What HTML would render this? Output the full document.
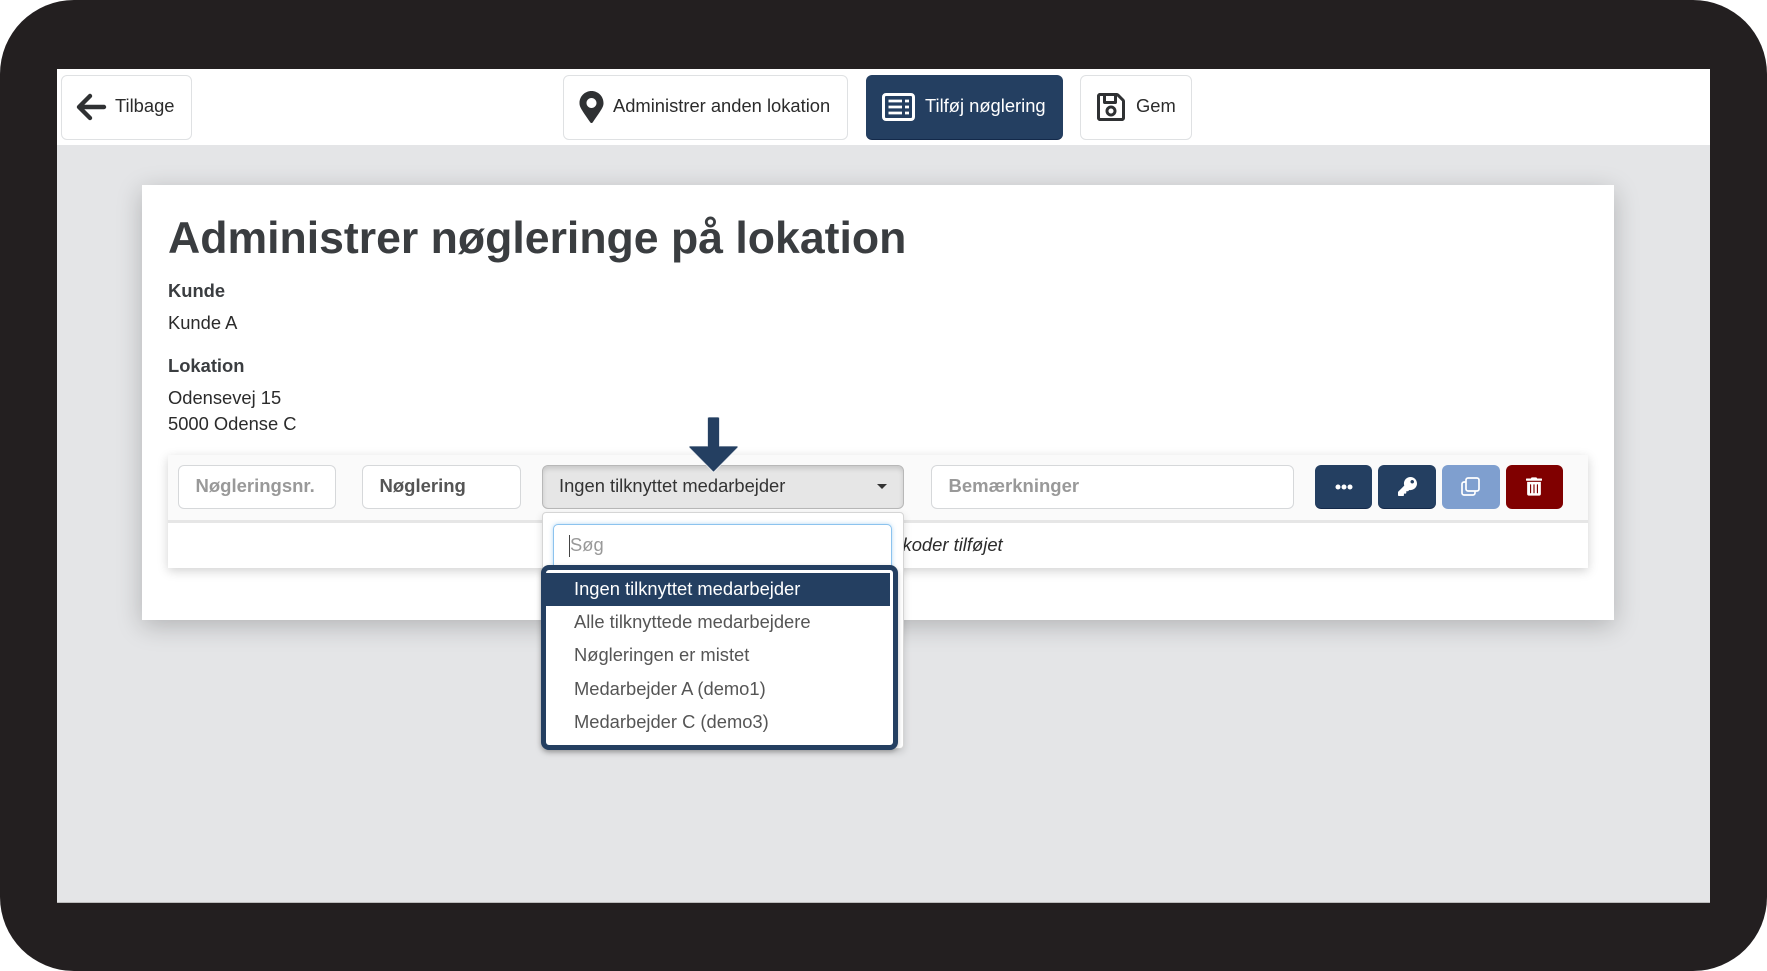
<!DOCTYPE html>
<html><head><meta charset="utf-8"><title>Administrer nøgleringe</title>
<style>
html,body{margin:0;padding:0;background:#fff}
body{width:1767px;height:971px;position:relative;overflow:hidden;font-family:"Liberation Sans",sans-serif;font-size:18.35px;color:#2b2b2b}
div,span,svg{position:absolute;box-sizing:border-box}
.t{white-space:nowrap;line-height:26px}
.btn{background:#fff;border:1.5px solid #dfe1e3;border-radius:6px}
.inp{background:#fff;border:1.5px solid #d6d8da;border-radius:6px;font-weight:bold;color:#999;line-height:40px;padding-left:16.5px;white-space:nowrap;font-size:18.5px}
.sq{background:#243f61;border-radius:6px;top:465px;height:44px;border-bottom:1px solid #13294a}
.it{left:574px;color:#555;white-space:nowrap;line-height:26px}
</style></head><body>
<div style="left:0;top:0;width:1767px;height:971px;background:#231f20;border-radius:74px"></div>
<div style="left:57px;top:69px;width:1653px;height:834px;background:#e4e5e7;border-bottom:1px solid #bbb"></div>
<div style="left:57px;top:69px;width:1653px;height:76px;background:#fff"></div>

<div class="btn" style="left:60.500px;top:75px;width:131.500px;height:65px"></div>
<svg style="left:76px;top:92px" width="32" height="30" viewBox="0 0 32 30"><path d="M28 15H4M14 4L3 15l11 11" fill="none" stroke="#2f3133" stroke-width="4.4" stroke-linecap="round" stroke-linejoin="round"/></svg>
<div class="t" style="left:115px;top:93px;">Tilbage</div>

<div class="btn" style="left:563px;top:75px;width:285px;height:65px"></div>
<svg style="left:579px;top:91px" width="25" height="32" viewBox="0 0 384 512"><path fill="#2f3133" d="M172.268 501.67C26.97 291.031 0 256.028 0 192 0 85.961 85.961 0 192 0s192 85.961 192 192c0 64.028-26.97 99.031-172.268 309.67-9.535 13.774-29.93 13.773-39.464 0zM192 272c44.183 0 80-35.817 80-80s-35.817-80-80-80-80 35.817-80 80 35.817 80 80 80z"/></svg>
<div class="t" style="left:613px;top:93px">Administrer anden lokation</div>

<div style="left:866px;top:75px;width:197px;height:65px;background:#243f61;border-radius:6px;border-bottom:1px solid #13294a"></div>
<svg style="left:882px;top:93px" width="33" height="28" viewBox="0 0 33 28"><rect x="1.500" y="1.500" width="30" height="25" rx="2.500" fill="none" stroke="#fff" stroke-width="3"/><path d="M6.500 8h13.500M6.500 14h13.500M6.500 20h13.500M23 8h4M23 14h4M23 20h4" stroke="#fff" stroke-width="2.800"/></svg>
<div class="t" style="left:925px;top:93px;color:#fff">Tilføj nøglering</div>

<div class="btn" style="left:1080px;top:75px;width:112px;height:65px"></div>
<svg style="left:1097px;top:91px" width="28" height="32" viewBox="0 0 448 512"><path fill="#2f3133" d="M433.941 129.941l-83.882-83.882A48 48 0 0 0 316.118 32H48C21.49 32 0 53.49 0 80v352c0 26.51 21.49 48 48 48h352c26.51 0 48-21.49 48-48V163.882a48 48 0 0 0-14.059-33.941zM272 80v80H144V80h128zm122 352H54a6 6 0 0 1-6-6V86a6 6 0 0 1 6-6h42v104c0 13.255 10.745 24 24 24h176c13.255 0 24-10.745 24-24V83.882l78.243 78.243a6 6 0 0 1 1.757 4.243V426a6 6 0 0 1-6 6zM224 232c-48.523 0-88 39.477-88 88s39.477 88 88 88 88-39.477 88-88-39.477-88-88-88zm0 128c-22.056 0-40-17.944-40-40s17.944-40 40-40 40 17.944 40 40-17.944 40-40 40z"/></svg>
<div class="t" style="left:1136px;top:93px">Gem</div>

<div style="left:142px;top:184.500px;width:1472px;height:435.500px;background:#fff;box-shadow:0 6px 24px rgba(0,0,0,.22)"></div>
<div class="t" style="left:168px;top:211px;font-size:44.6px;font-weight:bold;line-height:56px;color:#3a3d40">Administrer nøgleringe på lokation</div>
<div class="t" style="left:168px;top:278px;font-weight:bold;color:#3a3d40">Kunde</div>
<div class="t" style="left:168px;top:309.500px">Kunde A</div>
<div class="t" style="left:168px;top:353px;font-weight:bold;color:#3a3d40">Lokation</div>
<div class="t" style="left:168px;top:385px">Odensevej 15</div>
<div class="t" style="left:168px;top:411px">5000 Odense C</div>

<div style="left:168px;top:455px;width:1420px;height:113px;background:#fff;box-shadow:0 3px 10px rgba(0,0,0,.18)"></div>
<div style="left:168px;top:455px;width:1420px;height:65px;background:#fafafa"></div>
<div style="left:168px;top:519.500px;width:1420px;height:3px;background:#e6e6e6"></div>

<div class="inp" style="left:178px;top:465px;width:158px;height:44px">Nøgleringsnr.</div>
<div class="inp" style="left:362px;top:465px;width:159px;height:44px;color:#555">Nøglering</div>
<div class="inp" style="left:541.500px;top:465px;width:362.500px;height:43.500px;background:#e6e6e6;border-color:#b8b8b8;font-weight:normal;color:#333;font-size:18.35px;box-shadow:inset 0 3px 5px rgba(0,0,0,.125)">Ingen tilknyttet medarbejder</div>
<div style="left:877px;top:484px;width:0;height:0;border-left:5px solid transparent;border-right:5px solid transparent;border-top:5.500px solid #333"></div>
<div class="inp" style="left:931px;top:465px;width:363px;height:44px">Bemærkninger</div>

<div class="sq" style="left:1315px;width:57px"></div>
<svg style="left:1334.500px;top:483px" width="18" height="8" viewBox="0 0 18 8"><circle cx="3" cy="4" r="2.500" fill="#fff"/><circle cx="9" cy="4" r="2.500" fill="#fff"/><circle cx="15" cy="4" r="2.500" fill="#fff"/></svg>
<div class="sq" style="left:1378px;width:58px"></div>
<svg style="left:1398px;top:477px" width="19" height="19" viewBox="0 0 512 512"><path fill="#fff" d="M512 176.001C512 273.203 433.202 352 336 352c-11.22 0-22.19-1.062-32.827-3.069l-24.012 27.014A23.999 23.999 0 0 1 261.223 384H224v40c0 13.255-10.745 24-24 24h-40v40c0 13.255-10.745 24-24 24H24c-13.255 0-24-10.745-24-24v-78.059c0-6.365 2.529-12.47 7.029-16.971l161.802-161.802C163.108 213.814 160 195.271 160 176 160 78.798 238.797.001 335.999 0 433.488-.001 512 78.511 512 176.001zM336 128c0 26.51 21.49 48 48 48s48-21.49 48-48-21.49-48-48-48-48 21.49-48 48z"/></svg>
<div class="sq" style="left:1442px;width:58px;background:#7f9fcf;border-bottom-color:#7f9fcf"></div>
<svg style="left:1461px;top:477px" width="19" height="19" viewBox="0 0 19 19"><rect x="5" y="1" width="13" height="13" rx="2" fill="none" stroke="#fff" stroke-width="1.700"/><path d="M5 5H3a2 2 0 0 0-2 2v9a2 2 0 0 0 2 2h9a2 2 0 0 0 2-2v-2" fill="none" stroke="#fff" stroke-width="1.700"/></svg>
<div class="sq" style="left:1506px;width:57px;background:#800000;border-bottom-color:#800000"></div>
<svg style="left:1526px;top:477px" width="16" height="19" viewBox="0 0 448 512"><path fill="#fff" d="M32 464a48 48 0 0 0 48 48h288a48 48 0 0 0 48-48V128H32zm272-256a16 16 0 0 1 32 0v224a16 16 0 0 1-32 0zm-96 0a16 16 0 0 1 32 0v224a16 16 0 0 1-32 0zm-96 0a16 16 0 0 1 32 0v224a16 16 0 0 1-32 0zM432 32H312l-9.4-18.7A24 24 0 0 0 281.1 0H166.8a23.72 23.720 0 0 0-21.4 13.3L136 32H16A16 16 0 0 0 0 48v32a16 16 0 0 0 16 16h416a16 16 0 0 0 16-16V48a16 16 0 0 0-16-16z"/></svg>

<div class="t" style="left:902.500px;top:532px;font-style:italic;font-size:18.4px">koder tilføjet</div>

<div style="left:541.500px;top:512px;width:362.500px;height:237px;background:#fff;border:1px solid #d5d5d5;border-radius:4px;box-shadow:0 3px 8px rgba(0,0,0,.15)"></div>
<div style="left:553px;top:524px;width:339px;height:48px;background:#fff;border:1.500px solid #8cc3ee;border-radius:5px;box-shadow:0 0 4px rgba(102,175,233,.5)"></div>
<div style="left:569px;top:535px;width:1px;height:22px;background:#444"></div>
<div class="t" style="left:570px;top:532px;color:#999">Søg</div>

<div style="left:540.500px;top:565px;width:357.500px;height:185px;background:#fff;border:5px solid #243f61;border-radius:8px;box-shadow:0 2px 5px rgba(0,0,0,.25)"></div>
<div style="left:545.500px;top:573px;width:344px;height:32.500px;background:#243f61"></div>
<div class="it" style="top:575.500px;color:#fff">Ingen tilknyttet medarbejder</div>
<div class="it" style="top:609px">Alle tilknyttede medarbejdere</div>
<div class="it" style="top:642px">Nøgleringen er mistet</div>
<div class="it" style="top:675.500px">Medarbejder A (demo1)</div>
<div class="it" style="top:709px">Medarbejder C (demo3)</div>

<svg style="left:687px;top:415px" width="53" height="60" viewBox="0 0 53 60"><path d="M20.500 3.500a1.500 1.500 0 0 1 1.500-1.500h9a1.500 1.500 0 0 1 1.500 1.500V31h17.500a1 1 0 0 1 .7 1.700L27.300 56.500a1.200 1.200 0 0 1-1.600 0L2.300 32.700a1 1 0 0 1 .7-1.700H20.500z" fill="#243f61" stroke="#fff" stroke-width="1" stroke-opacity=".7"/></svg>
</body></html>
